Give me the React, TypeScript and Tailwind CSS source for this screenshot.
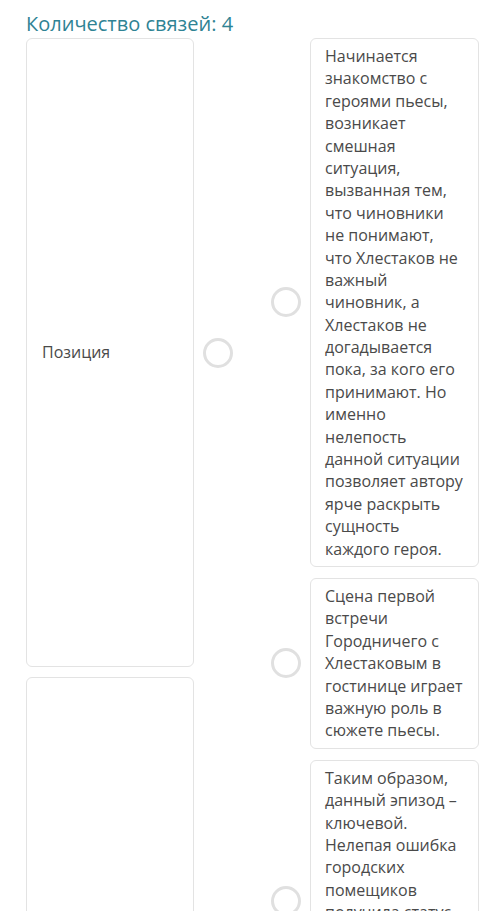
import React from "react";

const rightItems = [
  [
    "Начинается",
    "знакомство с",
    "героями пьесы,",
    "возникает",
    "смешная",
    "ситуация,",
    "вызванная тем,",
    "что чиновники",
    "не понимают,",
    "что Хлестаков не",
    "важный",
    "чиновник, а",
    "Хлестаков не",
    "догадывается",
    "пока, за кого его",
    "принимают. Но",
    "именно",
    "нелепость",
    "данной ситуации",
    "позволяет автору",
    "ярче раскрыть",
    "сущность",
    "каждого героя.",
  ],
  [
    "Сцена первой",
    "встречи",
    "Городничего с",
    "Хлестаковым в",
    "гостинице играет",
    "важную роль в",
    "сюжете пьесы.",
  ],
  [
    "Таким образом,",
    "данный эпизод –",
    "ключевой.",
    "Нелепая ошибка",
    "городских",
    "помещиков",
    "получила статус",
    "основной",
    "завязки всего",
    "сюжета",
    "комедии.",
    "",
  ],
];

function Dot() {
  return <div className="h-[30px] w-[30px] shrink-0 rounded-full border-[3px] border-[#e0e0e0] bg-white" />;
}

export default function App() {
  return (
    <div
      className="h-[911px] w-[500px] overflow-hidden bg-white px-[26px] text-[16px] leading-[22.4px] text-[#4a4a4a]"
      style={{ fontFamily: '"Open Sans", "Noto Sans", sans-serif' }}
    >
      <div className="pt-[10px] text-[20px] leading-[28px] text-[#2f8394]">Количество связей: 4</div>

      <div className="flex items-start">
        <div className="flex w-[207px] shrink-0 flex-col gap-[10px]">
          <div className="flex items-center gap-[9px]">
            <div className="flex h-[629px] w-[168px] shrink-0 items-center rounded-md border border-[#e3e3e3] pl-[15px]">
              Позиция
            </div>
            <Dot />
          </div>
          <div className="flex items-center gap-[9px]">
            <div className="h-[629px] w-[168px] shrink-0 rounded-md border border-[#e3e3e3]" />
            <Dot />
          </div>
        </div>

        <div className="ml-[38px] flex flex-col gap-[11px]">
          {rightItems.map((lines, i) => (
            <div key={i} className="flex items-center gap-[9px]">
              <Dot />
              <div className="w-[169px] shrink-0 rounded-md border border-[#e3e3e3] py-[6px] pl-[14px] pr-[8px]">
                {lines.map((l, j) => (
                  <span key={j} className="block h-[22.4px] whitespace-nowrap">
                    {l}
                  </span>
                ))}
              </div>
            </div>
          ))}
        </div>
      </div>
    </div>
  );
}
